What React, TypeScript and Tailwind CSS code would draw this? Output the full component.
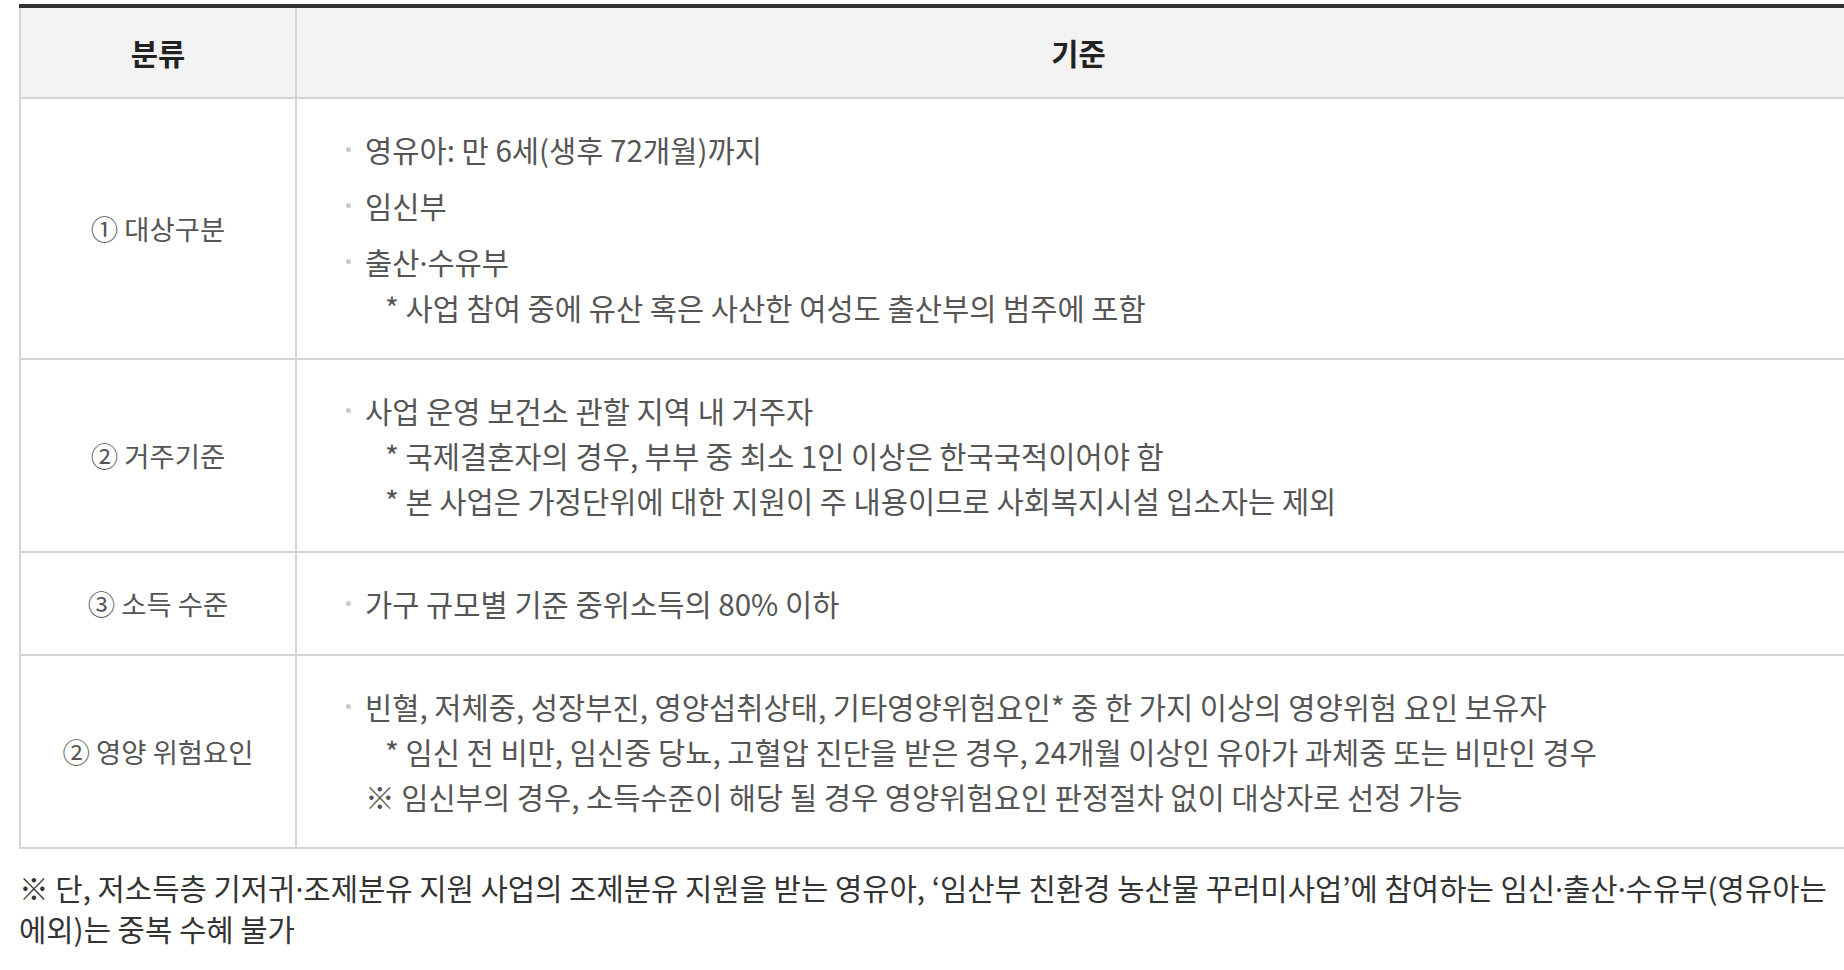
import React from "react";

function T({ s }: { s: string }) {
  const parts = s.split("·");
  return (
    <>
      {parts.map((p, i) => (
        <React.Fragment key={i}>
          {i > 0 && <span className="font-['Noto_Sans']">·</span>}
          {p}
        </React.Fragment>
      ))}
    </>
  );
}

const Dot = () => (
  <span className="mt-[20px] mr-[14px] h-[5px] w-[5px] shrink-0 rounded-full bg-[#cbcbcb]" />
);

function Item({ text, sub, first }: { text: string; sub?: string[]; first?: boolean }) {
  return (
    <li className={`flex ${first ? "" : "mt-[11px]"}`}>
      <Dot />
      <div>
        <div>
          <T s={text} />
        </div>
        {sub?.map((s, i) => (
          <div key={i} className="pl-[20px]">
            <T s={s} />
          </div>
        ))}
      </div>
    </li>
  );
}

function Row({ num, label, children }: { num: string; label: string; children: React.ReactNode }) {
  return (
    <div className="grid grid-cols-[276px_1fr] border-b-2 border-[#d4d4d4]">
      <div className="flex items-center justify-center whitespace-pre border-l-2 border-[#d4d4d4] text-[27.4px] text-[#555]">
        <span>{num}</span>
        <span>{" " + label}</span>
      </div>
      <div className="border-l-2 border-[#d4d4d4] py-[28px] pl-[49px] text-[#555]">{children}</div>
    </div>
  );
}

export default function App() {
  return (
    <div
      className="h-[970px] w-[1844px] overflow-hidden bg-white pl-[19px] pt-[4px] text-[29.6px] leading-[45px]"
      style={{ fontFamily: '"Noto Sans CJK KR", "Noto Sans", sans-serif' }}
    >
      <div className="w-[1841px] border-t-4 border-[#333]">
        <div className="grid h-[91px] grid-cols-[276px_1fr] border-b-2 border-[#d4d4d4] bg-[#f3f3f3] font-bold text-[#222]">
          <div className="flex items-center justify-center border-l-2 border-[#d4d4d4]">분류</div>
          <div className="flex items-center justify-center border-l-2 border-[#d4d4d4]">기준</div>
        </div>

        <Row num="①" label="대상구분">
          <ul>
            <Item first text="영유아: 만 6세(생후 72개월)까지" />
            <Item text="임신부" />
            <Item text="출산·수유부" sub={["* 사업 참여 중에 유산 혹은 사산한 여성도 출산부의 범주에 포함"]} />
          </ul>
        </Row>

        <Row num="②" label="거주기준">
          <ul>
            <Item
              first
              text="사업 운영 보건소 관할 지역 내 거주자"
              sub={[
                "* 국제결혼자의 경우, 부부 중 최소 1인 이상은 한국국적이어야 함",
                "* 본 사업은 가정단위에 대한 지원이 주 내용이므로 사회복지시설 입소자는 제외",
              ]}
            />
          </ul>
        </Row>

        <Row num="③" label="소득 수준">
          <ul>
            <Item first text="가구 규모별 기준 중위소득의 80% 이하" />
          </ul>
        </Row>

        <Row num="②" label="영양 위험요인">
          <ul>
            <Item
              first
              text="빈혈, 저체중, 성장부진, 영양섭취상태, 기타영양위험요인* 중 한 가지 이상의 영양위험 요인 보유자"
              sub={["* 임신 전 비만, 임신중 당뇨, 고혈압 진단을 받은 경우, 24개월 이상인 유아가 과체중 또는 비만인 경우"]}
            />
          </ul>
          <div className="pl-[19px]">※ 임신부의 경우, 소득수준이 해당 될 경우 영양위험요인 판정절차 없이 대상자로 선정 가능</div>
        </Row>
      </div>

      <p className="mt-[19px] whitespace-nowrap text-[29.7px] leading-[40px] text-[#333]">
        <T s="※ 단, 저소득층 기저귀·조제분유 지원 사업의 조제분유 지원을 받는 영유아, ‘임산부 친환경 농산물 꾸러미사업’에 참여하는 임신·출산·수유부(영유아는" />
        <br />
        에외)는 중복 수혜 불가
      </p>
    </div>
  );
}
